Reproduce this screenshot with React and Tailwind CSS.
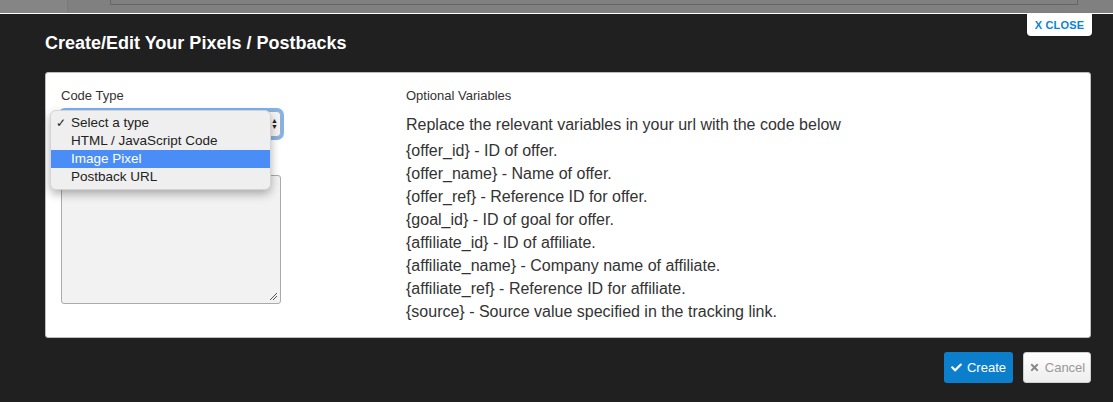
import React from 'react';
import { FaCheck, FaTimes } from 'react-icons/fa';

const variables = [
    ['{offer_id}', 'ID of offer.'],
    ['{offer_name}', 'Name of offer.'],
    ['{offer_ref}', 'Reference ID for offer.'],
    ['{goal_id}', 'ID of goal for offer.'],
    ['{affiliate_id}', 'ID of affiliate.'],
    ['{affiliate_name}', 'Company name of affiliate.'],
    ['{affiliate_ref}', 'Reference ID for affiliate.'],
    ['{source}', 'Source value specified in the tracking link.'],
];

const options = ['Select a type', 'HTML / JavaScript Code', 'Image Pixel', 'Postback URL'];

const App = () => {
    return (
        <div className="w-[1113px] h-[402px] overflow-hidden bg-[#202020] flex flex-col" style={{ fontFamily: '"Liberation Sans", Arial, sans-serif' }}>
            {/* page behind the overlay */}
            <div className="h-[13px] bg-[#808080] flex shrink-0">
                <div className="w-[68px] bg-[#858585] border-r border-[#7a7a7a]" />
                <div className="w-[42px]" />
                <div className="w-[968px] h-[5px] border-b border-x border-[#666]" />
            </div>
            <div className="h-px bg-white shrink-0" />

            {/* modal */}
            <div className="relative flex-1 pl-[45px] pr-[22px] pt-[19px]">
                <button className="absolute top-0 right-[21px] h-[22px] w-[65px] bg-white rounded-b-[4px] text-[11px] font-bold text-[#0b84d4] tracking-[0.2px] shadow-sm">
                    X CLOSE
                </button>

                <h2 className="text-[18px] leading-[20px] font-bold text-white">Create/Edit Your Pixels / Postbacks</h2>

                <div className="mt-[19px] h-[266px] bg-white border border-[#bdbdbd] rounded-[3px] flex pl-[15px] pt-[15px]">
                    {/* left column */}
                    <div className="w-[345px] shrink-0 relative">
                        <label className="block text-[13px] leading-[16px] text-[#333]">Code Type</label>
                        <div className="mt-[7px] w-[220px] h-[26px] rounded-[4px] bg-[#f4f4f4] border border-[#aaa] shadow-[0_0_0_3px_#7fb2f0] flex items-center justify-end pr-[2px]">
                            <span className="flex flex-col text-[7px] leading-[6px] text-[#222]">
                                <span>▲</span>
                                <span>▼</span>
                            </span>
                        </div>
                        <div className="mt-[38px] w-[220px] h-[129px] rounded-[3px] bg-[#f2f2f2] border border-[#aaa] relative">
                            <svg className="absolute right-[2px] bottom-[2px]" width="9" height="9" viewBox="0 0 9 9">
                                <path d="M1 8 L8 1 M4 8 L8 4" stroke="#555" strokeWidth="1" />
                            </svg>
                        </div>

                        {/* native select dropdown */}
                        <div className="absolute left-[-11px] top-[22px] w-[221px] bg-[#efefef] rounded-[6px] shadow-[0_4px_10px_rgba(0,0,0,0.3)] border border-[#d4d4d4] py-[3px]">
                            {options.map((opt, i) => (
                                <div
                                    key={opt}
                                    className={`h-[18px] flex items-center text-[13.5px] ${i === 2 ? 'bg-[#4a8df7] text-white' : 'text-[#222]'}`}
                                >
                                    <span className="w-[20px] pl-[5px] text-[12px]">{i === 0 ? '✓' : ''}</span>
                                    <span>{opt}</span>
                                </div>
                            ))}
                        </div>
                    </div>

                    {/* right column */}
                    <div className="text-[#333]">
                        <div className="text-[13px] leading-[16px]">Optional Variables</div>
                        <p className="mt-[9px] text-[16px] leading-[23px]">Replace the relevant variables in your url with the code below</p>
                        <ul className="mt-[3px]">
                            {variables.map(([code, desc]) => (
                                <li key={code} className="text-[16px] leading-[23px]">
                                    {code} - {desc}
                                </li>
                            ))}
                        </ul>
                    </div>
                </div>

                <div className="mt-[14px] flex justify-end gap-[10px]">
                    <button className="h-[31px] w-[69px] rounded-[3px] bg-[#0c7fcc] text-white text-[13px] flex items-center justify-center gap-[5px]">
                        <FaCheck className="text-[11px]" />
                        Create
                    </button>
                    <button className="h-[31px] w-[68px] rounded-[3px] bg-gradient-to-b from-white to-[#ededed] border border-[#cfcfcf] text-[#999] text-[13px] flex items-center justify-center gap-[5px]">
                        <FaTimes className="text-[11px] text-[#888]" />
                        Cancel
                    </button>
                </div>
            </div>
        </div>
    );
};

export default App;
